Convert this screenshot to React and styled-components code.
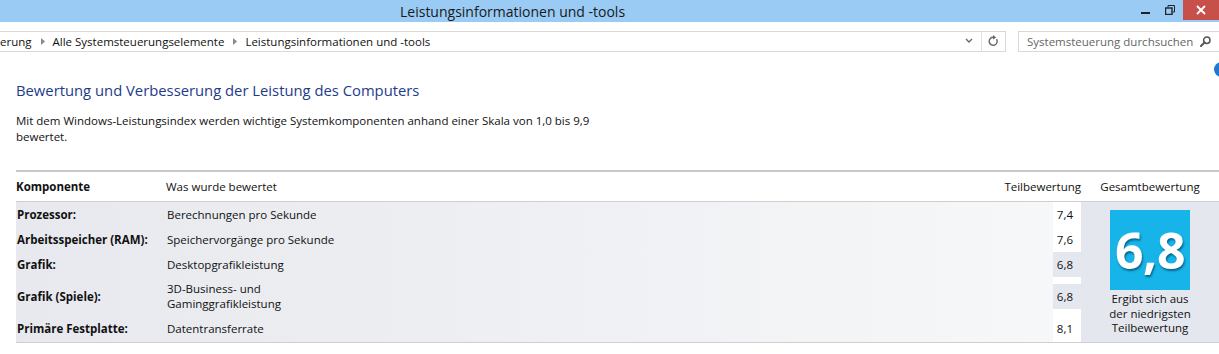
import React from 'react';
import styled, { createGlobalStyle } from 'styled-components';

const FONT = `"Open Sans", "Noto Sans", sans-serif`;

const GlobalStyle = createGlobalStyle`
  html, body {
    margin: 0;
    padding: 0;
    background: #fff;
  }
  body {
    font-family: ${FONT};
    font-size: 11.5px;
    color: #000;
  }
`;

const Window = styled.div`
  width: 1219px;
  height: 354px;
  overflow: hidden;
  background: #fff;
  display: flex;
  flex-direction: column;
`;

const TitleBar = styled.div`
  height: 22px;
  background: #99cbf4;
  display: flex;
  align-items: center;
  flex-shrink: 0;
`;

const Title = styled.div`
  flex: 1;
  padding-left: 400px;
  font-size: 14px;
  color: #1a1a1a;
  white-space: nowrap;
`;

const WinButton = styled.div`
  width: ${(p) => p.$w || 23}px;
  height: 20px;
  align-self: flex-start;
  display: flex;
  align-items: center;
  justify-content: center;
  background: ${(p) => (p.$close ? '#c7504b' : 'transparent')};
`;

const NavBar = styled.div`
  display: flex;
  align-items: center;
  padding-top: 8px;
  height: 22px;
  flex-shrink: 0;
`;

const AddressBox = styled.div`
  width: 1006px;
  height: 21px;
  border: 1px solid #d9d9d9;
  border-left: none;
  display: flex;
  align-items: center;
  box-sizing: border-box;
`;

const Crumbs = styled.div`
  flex: 1;
  display: flex;
  align-items: center;
  white-space: nowrap;
  font-size: 11.5px;
  color: #111;
`;

const Crumb = styled.span``;

const CrumbArrow = styled.svg`
  width: 4px;
  height: 7px;
  margin: 0 8px 0 9px;
`;

const AddrIcon = styled.div`
  width: 24px;
  height: 100%;
  display: flex;
  align-items: center;
  justify-content: center;
  border-left: ${(p) => (p.$sep ? '1px solid #e3e3e3' : 'none')};
  box-sizing: border-box;
`;

const SearchBox = styled.div`
  margin-left: 12px;
  flex: 1;
  height: 21px;
  border: 1px solid #d9d9d9;
  border-right: none;
  box-sizing: border-box;
  display: flex;
  align-items: center;
  padding-left: 8px;
  font-size: 11.5px;
  color: #666;
`;

const SearchText = styled.span`
  flex: 1;
  white-space: nowrap;
`;

const Content = styled.div`
  flex: 1;
  display: flex;
  flex-direction: column;
  padding-left: 16px;
`;

const ToolRow = styled.div`
  display: flex;
  justify-content: flex-end;
  height: 15px;
  margin-top: 10px;
`;

const HelpDot = styled.div`
  width: 15px;
  height: 15px;
  border-radius: 50%;
  background: #1e78d0;
  margin-right: -10px;
`;

const Heading = styled.h1`
  margin: 2px 0 0;
  font-size: 14.8px;
  font-weight: 400;
  color: #1e3b8a;
  line-height: 22px;
`;

const Intro = styled.p`
  margin: 12px 0 0;
  width: 600px;
  font-size: 11.5px;
  line-height: 16px;
  color: #111;
`;

const Table = styled.div`
  margin-top: 25px;
  border-top: 2px solid #c9c9c9;
  border-bottom: 1px solid #cfcfcf;
`;

const HeadRow = styled.div`
  display: grid;
  grid-template-columns: 149px 1fr auto 138px;
  height: 29px;
  align-items: center;
  border-bottom: 1px solid #cfcfcf;
  font-size: 11.5px;
  color: #111;
`;

const HeadCell = styled.div`
  font-weight: ${(p) => (p.$bold ? 700 : 400)};
  text-align: ${(p) => p.$align || 'left'};
  white-space: nowrap;
  padding-left: ${(p) => p.$pl || 0}px;
`;

const Body = styled.div`
  display: grid;
  grid-template-columns: 149px 1fr 28px 138px;
  grid-template-rows: 25px 25px 25px 38px 27px;
  background: linear-gradient(to right, #e7e9ee 0%, #eff0f3 45%, #f9fafb 100%);
  font-size: 11.5px;
  color: #111;
`;

const Label = styled.div`
  display: flex;
  align-items: center;
  font-weight: 700;
  padding-left: 1px;
  white-space: nowrap;
`;

const Desc = styled.div`
  display: flex;
  align-items: center;
  padding-left: 2px;
  line-height: 15px;
`;

const ScoreCell = styled.div`
  background: #fff;
  display: flex;
  align-items: center;
`;

const ScoreValue = styled.div`
  width: 100%;
  height: 25px;
  box-sizing: border-box;
  padding-right: 8px;
  display: flex;
  align-items: center;
  justify-content: flex-end;
  background: ${(p) => (p.$low ? '#e5e7ee' : 'transparent')};
`;

const Overall = styled.div`
  grid-column: 4;
  grid-row: 1 / span 5;
  background: #e5e7ee;
  display: flex;
  flex-direction: column;
  align-items: center;
  padding-top: 8px;
`;

const ScoreTile = styled.div`
  width: 80px;
  height: 80px;
  background: #16b4e8;
  display: flex;
  align-items: center;
  justify-content: center;
  color: #fff;
  font-size: 50px;
  font-weight: 700;
  letter-spacing: -0.5px;
  text-shadow: 1px 2px 2px rgba(0, 40, 70, 0.55);
`;

const OverallNote = styled.div`
  margin-top: 2px;
  text-align: center;
  font-size: 11.5px;
  line-height: 14.5px;
  color: #111;
`;

const rows = [
  { label: 'Prozessor:', desc: 'Berechnungen pro Sekunde', score: '7,4' },
  { label: 'Arbeitsspeicher (RAM):', desc: 'Speichervorgänge pro Sekunde', score: '7,6' },
  { label: 'Grafik:', desc: 'Desktopgrafikleistung', score: '6,8', low: true },
  { label: 'Grafik (Spiele):', desc: ['3D-Business- und', 'Gaminggrafikleistung'], score: '6,8', low: true },
  { label: 'Primäre Festplatte:', desc: 'Datentransferrate', score: '8,1' },
];

function App() {
  return (
    <Window>
      <GlobalStyle />
      <TitleBar>
        <Title>Leistungsinformationen und -tools</Title>
        <WinButton>
          <svg width="9" height="9" viewBox="0 0 9 9">
            <rect x="0" y="6" width="9" height="2" fill="#222" />
          </svg>
        </WinButton>
        <WinButton $w={26}>
          <svg width="10" height="10" viewBox="0 0 10 10" fill="none" stroke="#222" strokeWidth="1">
            <rect x="0.5" y="3" width="6.5" height="6.5" strokeWidth="1.4" />
            <path d="M3 2.5V0.5H9.5V7H7.5" />
          </svg>
        </WinButton>
        <WinButton $w={36} $close>
          <svg width="10" height="10" viewBox="0 0 10 10">
            <path d="M1 1L9 9M9 1L1 9" stroke="#fff" strokeWidth="1.8" />
          </svg>
        </WinButton>
      </TitleBar>

      <NavBar>
        <AddressBox>
          <Crumbs>
            <Crumb>erung</Crumb>
            <CrumbArrow viewBox="0 0 4 7">
              <path d="M0 0L4 3.5L0 7Z" fill="#8a8a8a" />
            </CrumbArrow>
            <Crumb>Alle Systemsteuerungselemente</Crumb>
            <CrumbArrow viewBox="0 0 4 7">
              <path d="M0 0L4 3.5L0 7Z" fill="#8a8a8a" />
            </CrumbArrow>
            <Crumb>Leistungsinformationen und -tools</Crumb>
          </Crumbs>
          <AddrIcon>
            <svg width="8" height="6" viewBox="0 0 8 6">
              <path d="M1 1L4 4L7 1" fill="none" stroke="#666" strokeWidth="1.4" />
            </svg>
          </AddrIcon>
          <AddrIcon $sep>
            <svg width="11" height="12" viewBox="0 0 11 12">
              <path d="M8.6 4.2A4 4 0 1 1 5.5 2.3" fill="none" stroke="#666" strokeWidth="1.4" />
              <path d="M5 0L8.2 2.4L5 4.6Z" fill="#666" />
            </svg>
          </AddrIcon>
        </AddressBox>
        <SearchBox>
          <SearchText>Systemsteuerung durchsuchen</SearchText>
          <svg width="11" height="11" viewBox="0 0 11 11" style={{ marginRight: 8 }}>
            <circle cx="6.8" cy="4.2" r="3.2" fill="none" stroke="#555" strokeWidth="1.5" />
            <path d="M4.6 6.4L1 10" stroke="#555" strokeWidth="2" strokeLinecap="round" />
          </svg>
        </SearchBox>
      </NavBar>

      <Content>
        <ToolRow>
          <HelpDot />
        </ToolRow>
        <Heading>Bewertung und Verbesserung der Leistung des Computers</Heading>
        <Intro>
          Mit dem Windows-Leistungsindex werden wichtige Systemkomponenten anhand einer Skala von 1,0 bis 9,9
          bewertet.
        </Intro>

        <Table>
          <HeadRow>
            <HeadCell $bold>Komponente</HeadCell>
            <HeadCell $pl={1}>Was wurde bewertet</HeadCell>
            <HeadCell $align="right">Teilbewertung</HeadCell>
            <HeadCell $align="center">Gesamtbewertung</HeadCell>
          </HeadRow>
          <Body>
            {rows.map((r, i) => (
              <React.Fragment key={r.label}>
                <Label style={{ gridRow: i + 1 }}>{r.label}</Label>
                <Desc style={{ gridRow: i + 1 }}>
                  {Array.isArray(r.desc) ? (
                    <span>
                      {r.desc[0]}
                      <br />
                      {r.desc[1]}
                    </span>
                  ) : (
                    r.desc
                  )}
                </Desc>
                <ScoreCell style={{ gridRow: i + 1 }}>
                  <ScoreValue $low={r.low}>{r.score}</ScoreValue>
                </ScoreCell>
              </React.Fragment>
            ))}
            <Overall>
              <ScoreTile>6,8</ScoreTile>
              <OverallNote>
                Ergibt sich aus
                <br />
                der niedrigsten
                <br />
                Teilbewertung
              </OverallNote>
            </Overall>
          </Body>
        </Table>
      </Content>
    </Window>
  );
}

export default App;
